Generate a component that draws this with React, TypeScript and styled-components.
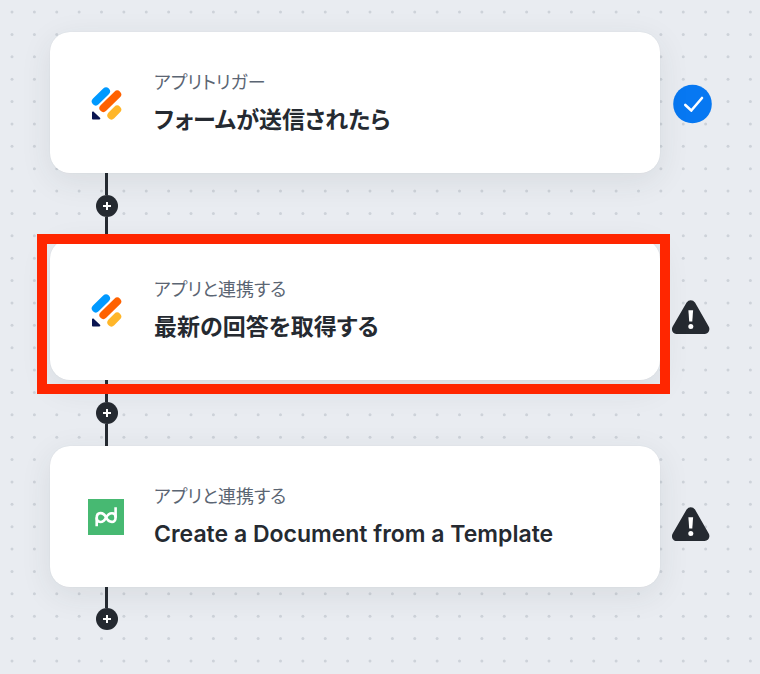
import React from "react";
import styled, { createGlobalStyle } from "styled-components";

const TILE = 179;
const DOTS_PER_TILE = 8;

/* One background tile: an 8 by 8 field of small dots. */
const dotTile = (() => {
  const at = (i: number) => 12 + (i * TILE) / DOTS_PER_TILE;
  const steps = Array.from({ length: DOTS_PER_TILE }, (_, i) => at(i));
  const dots = steps
    .flatMap((y) => steps.map((x) => `<circle cx='${x}' cy='${y}' r='1.5'/>`))
    .join("");
  const svg = `<svg xmlns='http://www.w3.org/2000/svg' width='${TILE}' height='${TILE}' fill='#cdd2d9'>${dots}</svg>`;
  return `url("data:image/svg+xml,${encodeURIComponent(svg).replace(/'/g, "%27")}")`;
})();

const GlobalStyle = createGlobalStyle`
  *, *::before, *::after { box-sizing: border-box; }
  body {
    margin: 0;
    background-color: #e9ecf1;
    font-family: Inter, "Noto Sans CJK JP", sans-serif;
    font-feature-settings: "palt";
    color: #252a31;
  }
`;

const Canvas = styled.main`
  min-height: 100vh;
  padding: 32px 48px 44px 50px;
  background-color: #e9ecf1;
  background-image: ${dotTile};
  background-size: ${TILE}px ${TILE}px;
`;

const Flow = styled.ol`
  margin: 0;
  padding: 0;
  list-style: none;
`;

const StepRow = styled.div`
  display: grid;
  grid-template-columns: minmax(0, 1fr) 39px;
  align-items: center;
  column-gap: 13px;
`;

const Card = styled.article`
  position: relative;
  display: flex;
  align-items: center;
  gap: 30px;
  min-height: 141px;
  padding: 32px 38px;
  border-radius: 20px;
  background: #fff;
  box-shadow: 0 0 1px rgba(40, 52, 58, 0.12), 0 8px 32px rgba(40, 55, 55, 0.09);
`;

const Highlight = styled.span`
  position: absolute;
  z-index: 2;
  inset: -5px -10px -14px -13px;
  border: 10px solid #ff2600;
  pointer-events: none;
`;

const AppIcon = styled.svg`
  flex: none;
  width: 36px;
  height: 36px;
`;

const CardText = styled.div`
  display: flex;
  flex-direction: column;
  gap: 6px;
  min-width: 0;
`;

const Kind = styled.p`
  margin: 0;
  font-size: 18px;
  line-height: 28px;
  color: #5b6573;
`;

const Title = styled.h2`
  margin: 0;
  font-size: 23px;
  font-weight: 600;
  line-height: 34px;
`;

const StatusIcon = styled.svg`
  display: block;
  width: 39px;
  height: 48px;
`;

const Connector = styled.div<{ $last?: boolean }>`
  display: flex;
  flex-direction: column;
  align-items: center;
  width: 23px;
  height: ${(p) => (p.$last ? "43px" : "66px")};
  margin-left: 45px;

  &::before,
  &::after {
    content: "";
    flex: 1;
    width: 3px;
    background: #252a31;
  }

  &::after {
    display: ${(p) => (p.$last ? "none" : "block")};
  }
`;

const AddButton = styled.button`
  display: grid;
  place-items: center;
  flex: none;
  width: 22px;
  height: 22px;
  padding: 0;
  border: 0;
  border-radius: 50%;
  background: #252a31;
  color: #fff;
  cursor: pointer;
`;

const FormLogo = () => (
  <AppIcon viewBox="0 0 36 36" aria-hidden="true">
    <g fill="none" strokeWidth="8" strokeLinecap="round">
      <path d="M7.8 16.4L18 6.4" stroke="#0099ff" />
      <path d="M15.4 23L29.2 9.5" stroke="#ff6100" />
      <path d="M23.4 30.4L29.2 24.5" stroke="#ffb629" />
    </g>
    <path d="M4 27.6C4 26.6 5.2 26.2 5.9 26.9L12 32.8C12.7 33.5 12.2 34.6 11.3 34.6H5.2C4.5 34.6 4 34.1 4 33.4Z" fill="#0a1551" />
  </AppIcon>
);

const DocumentLogo = () => (
  <AppIcon viewBox="0 0 36 36" aria-hidden="true">
    <path d="M0 0H36V36H0Z" fill="#47b972" />
    <g fill="none" stroke="#fff" strokeWidth="2.6">
      <path d="M8.7 27.2V19C8.7 12.6 15.3 12.7 18.1 18.4C21 24.3 27.6 24.4 27.6 18.4V8.2" />
      <path d="M8.7 18.6C8.7 24.4 15.3 24.4 18.1 18.6C21 12.7 27.6 12.7 27.6 18.6" />
    </g>
  </AppIcon>
);

const DoneStatus = () => (
  <StatusIcon viewBox="0 0 39 48" role="img" aria-label="完了">
    <circle cx="19.5" cy="25" r="19.3" fill="#0778f2" />
    <path d="M12.3 26L18.3 31.5L29 19" fill="none" stroke="#fff" strokeWidth="2.6" strokeLinejoin="round" strokeLinecap="round" />
  </StatusIcon>
);

const WarningStatus = () => (
  <StatusIcon viewBox="1 0 39 48" role="img" aria-label="警告" overflow="visible">
    <path d="M14.6 16.6C16.6 13.3 21 13.3 23 16.6L36.7 40.5C38.6 43.8 36.4 48 32.6 48H4.6C0.8 48 -1.2 43.8 0.7 40.5Z" fill="#252a31" />
    <path d="M16.4 24.2H21.1L20.3 35.4H17.2Z" fill="#fff" />
    <circle cx="18.8" cy="40.6" r="2.5" fill="#fff" />
  </StatusIcon>
);

type Step = {
  kind: string;
  title: string;
  logo: "form" | "document";
  done?: boolean;
  highlighted?: boolean;
};

const steps: Step[] = [
  { kind: "アプリトリガー", title: "フォームが送信されたら", logo: "form", done: true },
  { kind: "アプリと連携する", title: "最新の回答を取得する", logo: "form", highlighted: true },
  { kind: "アプリと連携する", title: "Create a Document from a Template", logo: "document" },
];

export default function App() {
  return (
    <>
      <GlobalStyle />
      <Canvas lang="ja">
        <Flow>
          {steps.map((step, index) => (
            <li key={step.title}>
              <StepRow>
                <Card>
                  {step.logo === "form" ? <FormLogo /> : <DocumentLogo />}
                  <CardText>
                    <Kind>{step.kind}</Kind>
                    <Title>{step.title}</Title>
                  </CardText>
                  {step.highlighted && <Highlight />}
                </Card>
                {step.done ? <DoneStatus /> : <WarningStatus />}
              </StepRow>
              <Connector $last={index === steps.length - 1}>
                <AddButton type="button" aria-label="ステップを追加">
                  <svg width="10" height="10" viewBox="0 0 10 10" aria-hidden="true">
                    <path d="M5 1V9M1 5H9" stroke="currentColor" strokeWidth="2" />
                  </svg>
                </AddButton>
              </Connector>
            </li>
          ))}
        </Flow>
      </Canvas>
    </>
  );
}
